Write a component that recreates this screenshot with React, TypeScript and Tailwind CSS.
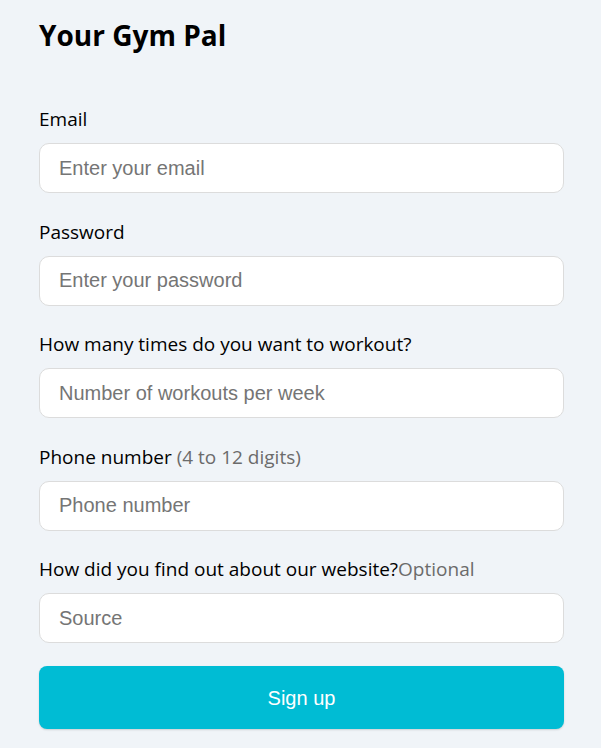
import React from "react";

const fields = [
  { label: "Email", placeholder: "Enter your email", type: "email" },
  { label: "Password", placeholder: "Enter your password", type: "password" },
  { label: "How many times do you want to workout?", placeholder: "Number of workouts per week", type: "number" },
  { label: "Phone number", hint: " (4 to 12 digits)", placeholder: "Phone number", type: "tel" },
  { label: "How did you find out about our website?", hint: "Optional", placeholder: "Source", type: "text" },
];

export default function App() {
  return (
    <div className="min-h-[748px] bg-[#f0f4f8] px-[39px] pt-[16px] font-['Open_Sans',sans-serif] text-black">
      <div className="w-[525px]">
        <h1 className="text-[28px] font-bold leading-[38px]">Your Gym Pal</h1>
        <form className="mt-[52px] flex flex-col gap-[25.5px]">
          {fields.map((f) => (
            <div key={f.label} className="flex flex-col">
              <label className="mb-[11px] text-[19px] leading-[26px]">
                {f.label}
                {f.hint && <span className="text-[#6b6b6b]">{f.hint}</span>}
              </label>
              <input
                type={f.type}
                placeholder={f.placeholder}
                className="h-[50px] rounded-[10px] border border-[#dcdcdc] bg-white px-[19px] font-['Liberation_Sans',Arial,sans-serif] text-[20px] outline-none placeholder:text-[#757575]"
              />
            </div>
          ))}
          <button
            type="button"
            className="-mt-[2.5px] h-[63px] rounded-[8px] bg-[#00bcd4] font-['Liberation_Sans',Arial,sans-serif] text-[20px] text-white shadow-[0_1px_2px_rgba(0,0,0,0.15)]"
          >
            Sign up
          </button>
        </form>
      </div>
    </div>
  );
}
